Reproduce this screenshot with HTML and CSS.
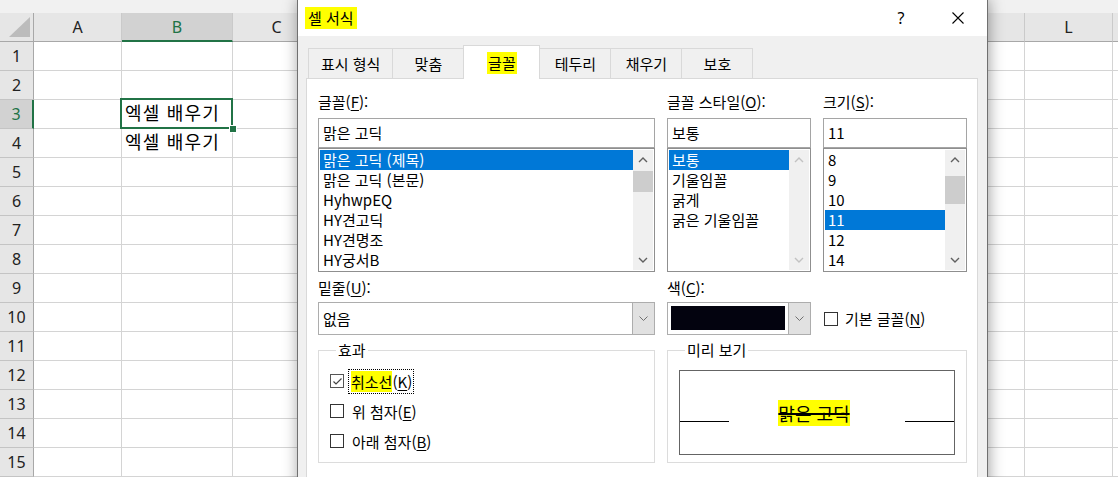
FILE: index.html
```html
<!DOCTYPE html>
<html lang="ko">
<head>
<meta charset="utf-8">
<title>셀 서식</title>
<link rel="stylesheet" href="styles.css">
</head>
<body>
<div class="sheet">
  <div class="topstrip"></div>
  <div class="grid">
    <div class="corner"><svg class="tri" width="33" height="28" viewBox="0 0 33 28"><polygon points="9,24 30,24 30,4"/></svg></div>
    <div class="ch">A</div><div class="ch sel">B</div><div class="ch">C</div><div class="ch">D</div><div class="ch">E</div><div class="ch">F</div><div class="ch">G</div><div class="ch">H</div><div class="ch">I</div><div class="ch">J</div><div class="ch">K</div><div class="ch">L</div><div class="ch"></div>

    <div class="rh">1</div><div class="c"></div><div class="c"></div><div class="c"></div><div class="c"></div><div class="c"></div><div class="c"></div><div class="c"></div><div class="c"></div><div class="c"></div><div class="c"></div><div class="c"></div><div class="c"></div><div class="c"></div>
    <div class="rh">2</div><div class="c"></div><div class="c"></div><div class="c"></div><div class="c"></div><div class="c"></div><div class="c"></div><div class="c"></div><div class="c"></div><div class="c"></div><div class="c"></div><div class="c"></div><div class="c"></div><div class="c"></div>
    <div class="rh sel">3</div><div class="c"></div><div class="c active">엑셀 배우기<span class="handle"></span></div><div class="c"></div><div class="c"></div><div class="c"></div><div class="c"></div><div class="c"></div><div class="c"></div><div class="c"></div><div class="c"></div><div class="c"></div><div class="c"></div><div class="c"></div>
    <div class="rh">4</div><div class="c"></div><div class="c">엑셀 배우기</div><div class="c"></div><div class="c"></div><div class="c"></div><div class="c"></div><div class="c"></div><div class="c"></div><div class="c"></div><div class="c"></div><div class="c"></div><div class="c"></div><div class="c"></div>
    <div class="rh">5</div><div class="c"></div><div class="c"></div><div class="c"></div><div class="c"></div><div class="c"></div><div class="c"></div><div class="c"></div><div class="c"></div><div class="c"></div><div class="c"></div><div class="c"></div><div class="c"></div><div class="c"></div>
    <div class="rh">6</div><div class="c"></div><div class="c"></div><div class="c"></div><div class="c"></div><div class="c"></div><div class="c"></div><div class="c"></div><div class="c"></div><div class="c"></div><div class="c"></div><div class="c"></div><div class="c"></div><div class="c"></div>
    <div class="rh">7</div><div class="c"></div><div class="c"></div><div class="c"></div><div class="c"></div><div class="c"></div><div class="c"></div><div class="c"></div><div class="c"></div><div class="c"></div><div class="c"></div><div class="c"></div><div class="c"></div><div class="c"></div>
    <div class="rh">8</div><div class="c"></div><div class="c"></div><div class="c"></div><div class="c"></div><div class="c"></div><div class="c"></div><div class="c"></div><div class="c"></div><div class="c"></div><div class="c"></div><div class="c"></div><div class="c"></div><div class="c"></div>
    <div class="rh">9</div><div class="c"></div><div class="c"></div><div class="c"></div><div class="c"></div><div class="c"></div><div class="c"></div><div class="c"></div><div class="c"></div><div class="c"></div><div class="c"></div><div class="c"></div><div class="c"></div><div class="c"></div>
    <div class="rh">10</div><div class="c"></div><div class="c"></div><div class="c"></div><div class="c"></div><div class="c"></div><div class="c"></div><div class="c"></div><div class="c"></div><div class="c"></div><div class="c"></div><div class="c"></div><div class="c"></div><div class="c"></div>
    <div class="rh">11</div><div class="c"></div><div class="c"></div><div class="c"></div><div class="c"></div><div class="c"></div><div class="c"></div><div class="c"></div><div class="c"></div><div class="c"></div><div class="c"></div><div class="c"></div><div class="c"></div><div class="c"></div>
    <div class="rh">12</div><div class="c"></div><div class="c"></div><div class="c"></div><div class="c"></div><div class="c"></div><div class="c"></div><div class="c"></div><div class="c"></div><div class="c"></div><div class="c"></div><div class="c"></div><div class="c"></div><div class="c"></div>
    <div class="rh">13</div><div class="c"></div><div class="c"></div><div class="c"></div><div class="c"></div><div class="c"></div><div class="c"></div><div class="c"></div><div class="c"></div><div class="c"></div><div class="c"></div><div class="c"></div><div class="c"></div><div class="c"></div>
    <div class="rh">14</div><div class="c"></div><div class="c"></div><div class="c"></div><div class="c"></div><div class="c"></div><div class="c"></div><div class="c"></div><div class="c"></div><div class="c"></div><div class="c"></div><div class="c"></div><div class="c"></div><div class="c"></div>
    <div class="rh">15</div><div class="c"></div><div class="c"></div><div class="c"></div><div class="c"></div><div class="c"></div><div class="c"></div><div class="c"></div><div class="c"></div><div class="c"></div><div class="c"></div><div class="c"></div><div class="c"></div><div class="c"></div>
  </div>
</div>

<div class="dialog">
  <div class="titlebar">
    <div class="title"><mark class="hl">셀 서식</mark></div>
    <div class="tbtn help">?</div>
    <div class="tbtn close"><svg width="12" height="12" viewBox="0 0 12 12"><path d="M0.5 0.5L11.5 11.5M11.5 0.5L0.5 11.5"/></svg></div>
  </div>
  <div class="dbody">
    <div class="tabs">
      <div class="tab">표시 형식</div>
      <div class="tab">맞춤</div>
      <div class="tab active"><mark class="hl">글꼴</mark></div>
      <div class="tab">테두리</div>
      <div class="tab">채우기</div>
      <div class="tab">보호</div>
    </div>
    <div class="panel">
      <div class="field">
        <div class="lbl">글꼴(<u>F</u>):</div>
        <div class="input">맑은 고딕</div>
        <div class="list">
          <div class="items">
            <div class="item sel">맑은 고딕 (제목)</div>
            <div class="item">맑은 고딕 (본문)</div>
            <div class="item">HyhwpEQ</div>
            <div class="item">HY견고딕</div>
            <div class="item">HY견명조</div>
            <div class="item">HY궁서B</div>
          </div>
          <div class="sbar">
            <div class="sbtn"><svg class="chev" width="10" height="6" viewBox="0 0 10 6"><polyline points="1,5 5,1 9,5"/></svg></div>
            <div class="track"><div class="thumb thumb-font"></div></div>
            <div class="sbtn"><svg class="chev" width="10" height="6" viewBox="0 0 10 6"><polyline points="1,1 5,5 9,1"/></svg></div>
          </div>
        </div>
      </div>

      <div class="field">
        <div class="lbl">글꼴 스타일(<u>O</u>):</div>
        <div class="input">보통</div>
        <div class="list">
          <div class="items">
            <div class="item sel">보통</div>
            <div class="item">기울임꼴</div>
            <div class="item">굵게</div>
            <div class="item">굵은 기울임꼴</div>
          </div>
          <div class="sbar">
            <div class="sbtn"><svg class="chev off" width="10" height="6" viewBox="0 0 10 6"><polyline points="1,5 5,1 9,5"/></svg></div>
            <div class="track"></div>
            <div class="sbtn"><svg class="chev off" width="10" height="6" viewBox="0 0 10 6"><polyline points="1,1 5,5 9,1"/></svg></div>
          </div>
        </div>
      </div>

      <div class="field">
        <div class="lbl">크기(<u>S</u>):</div>
        <div class="input">11</div>
        <div class="list">
          <div class="items">
            <div class="item">8</div>
            <div class="item">9</div>
            <div class="item">10</div>
            <div class="item sel">11</div>
            <div class="item">12</div>
            <div class="item">14</div>
          </div>
          <div class="sbar">
            <div class="sbtn"><svg class="chev" width="10" height="6" viewBox="0 0 10 6"><polyline points="1,5 5,1 9,5"/></svg></div>
            <div class="track"><div class="thumb thumb-size"></div></div>
            <div class="sbtn"><svg class="chev" width="10" height="6" viewBox="0 0 10 6"><polyline points="1,1 5,5 9,1"/></svg></div>
          </div>
        </div>
      </div>

      <div class="field">
        <div class="lbl lbl2">밑줄(<u>U</u>):</div>
        <div class="combo">
          <div class="cval">없음</div>
          <div class="cbtn"><svg class="dchev" width="9" height="5" viewBox="0 0 9 5"><polyline points="0.5,0.5 4.5,4.5 8.5,0.5"/></svg></div>
        </div>
      </div>

      <div class="field">
        <div class="lbl lbl2">색(<u>C</u>):</div>
        <div class="combo">
          <div class="swatch"></div>
          <div class="cbtn"><svg class="dchev" width="9" height="5" viewBox="0 0 9 5"><polyline points="0.5,0.5 4.5,4.5 8.5,0.5"/></svg></div>
        </div>
      </div>

      <div class="field field-end">
        <div class="check"><span class="box"></span><span>기본 글꼴(<u>N</u>)</span></div>
      </div>

      <fieldset class="group effects">
        <legend>효과</legend>
        <div class="erow"><span class="box on"><svg width="11" height="11" viewBox="0 0 11 11"><polyline points="1.5,5.5 4,8 9.5,2.5"/></svg></span><span class="focus"><mark class="hl">취소선</mark>(<u>K</u>)</span></div>
        <div class="erow"><span class="box"></span><span class="elbl">위 첨자(<u>E</u>)</span></div>
        <div class="erow"><span class="box"></span><span class="elbl">아래 첨자(<u>B</u>)</span></div>
      </fieldset>

      <fieldset class="group preview">
        <legend>미리 보기</legend>
        <div class="pbox">
          <div class="pline"></div>
          <div class="ptext"><mark class="hl">맑은 고딕</mark></div>
          <div class="pline"></div>
        </div>
      </fieldset>
    </div>
  </div>
</div>
</body>
</html>
```

FILE: styles.css
```css
* { box-sizing: border-box; }
html, body { margin: 0; padding: 0; }
body {
  width: 1118px;
  height: 477px;
  overflow: hidden;
  position: relative;
  background: #fff;
  color: #000;
  font-family: "Noto Sans CJK KR", "Noto Sans", sans-serif;
}

/* ---------- spreadsheet ---------- */
.sheet { width: 1118px; overflow: hidden; }
.topstrip { height: 13px; background: #f1f1f1; }
.grid {
  display: grid;
  grid-template-columns: 34px 88px 111px repeat(11, 88px);
  grid-auto-rows: 29px;
}
.corner {
  background: #e6e6e6;
  border-right: 1px solid #a8a8a8;
  border-bottom: 1px solid #a8a8a8;
}
.tri { display: block; }
.tri polygon { fill: #bcbcbc; }
.ch {
  background: #e6e6e6;
  border-right: 1px solid #cacaca;
  border-bottom: 1px solid #a8a8a8;
  display: flex;
  align-items: center;
  justify-content: center;
  font-family: "Noto Sans", sans-serif;
  font-size: 16px;
  color: #222;
}
.ch.sel {
  background: #d2d2d2;
  color: #217346;
  border-bottom: 2px solid #217346;
}
.rh {
  background: #e6e6e6;
  border-right: 1px solid #a8a8a8;
  border-bottom: 1px solid #c4c4c4;
  display: flex;
  align-items: center;
  justify-content: center;
  font-family: "Noto Sans", sans-serif;
  font-size: 16px;
  color: #222;
}
.rh.sel {
  background: #d2d2d2;
  color: #217346;
  border-right: 2px solid #217346;
}
.c {
  border-right: 1px solid #d4d4d4;
  border-bottom: 1px solid #d4d4d4;
  font-size: 18px;
  line-height: 24px;
  letter-spacing: 1.2px;
  padding-left: 3px;
  white-space: nowrap;
}
.c.active { position: relative; }
.c.active::before {
  content: "";
  position: absolute;
  left: -2px; top: -2px; right: -1px; bottom: -1px;
  border: 2px solid #217346;
}
.handle {
  position: absolute;
  right: -4px; bottom: -4px;
  width: 6px; height: 6px;
  background: #217346;
  box-shadow: 0 0 0 1px #fff;
}

/* ---------- dialog ---------- */
.dialog {
  position: absolute;
  left: 297px;
  top: -1px;
  width: 691px;
  height: 520px;
  background: #f0f0f0;
  border: 1px solid #707070;
  box-shadow: 1px 0 14px rgba(0, 0, 0, 0.38);
  font-family: "Noto Sans CJK KR", "Noto Sans", sans-serif;
  font-size: 15px;
  color: #000;
}
.hl {
  background: #ffff00;
  color: #000;
}
u { text-decoration-thickness: 1px; text-underline-offset: 2px; }

.titlebar {
  height: 36px;
  background: #fff;
  display: flex;
  align-items: center;
  padding: 0 6px 0 7px;
}
.title { flex: 1; }
.title .hl {
  display: inline-block;
  padding: 0 3px;
  line-height: 22px;
}
.tbtn {
  width: 46px;
  height: 36px;
  display: flex;
  align-items: center;
  justify-content: center;
}
.help { margin-right: 11px; font-family: "Noto Sans", sans-serif; font-size: 16px; }
.close path { stroke: #000; stroke-width: 1.1; fill: none; }

.dbody { padding: 0 9px 0 8px; }
.tabs {
  display: flex;
  align-items: flex-end;
  height: 42px;
  margin-left: 2px;
}
.tab {
  height: 30px;
  min-width: 72px;
  padding: 0 12px;
  border: 1px solid #d9d9d9;
  border-bottom: none;
  margin-right: -1px;
  line-height: 29px;
  text-align: center;
  background: #f0f0f0;
  white-space: nowrap;
}
.tab.active {
  position: relative;
  z-index: 1;
  background: #fff;
  height: 34px;
  min-width: 77px;
  margin-bottom: -1px;
  line-height: 33px;
}
.tab.active .hl {
  display: inline-block;
  line-height: 22px;
  padding: 0 1px;
}

.panel {
  background: #fff;
  border: 1px solid #d9d9d9;
  height: 440px;
  padding: 13px 9px 0 11px;
  display: grid;
  grid-template-columns: 337px 144px 144px;
  column-gap: 12px;
  row-gap: 6px;
  align-items: start;
  align-content: start;
}
.field { display: flex; flex-direction: column; }
.field-end { align-self: end; height: 33px; justify-content: center; }
.lbl { line-height: 20px; margin-bottom: 6px; white-space: nowrap; }
.lbl2 { margin-bottom: 4px; }
.input {
  height: 30px;
  border: 1px solid #a5a5a5;
  line-height: 28px;
  padding-left: 4px;
  background: #fff;
}
.list {
  height: 124px;
  border: 1px solid #8f8f8f;
  padding: 1px;
  display: flex;
  background: #fff;
}
.items { flex: 1; overflow: hidden; }
.item {
  height: 20px;
  line-height: 20px;
  padding-left: 3px;
  white-space: nowrap;
}
.item.sel { background: #0078d7; color: #fff; }
.sbar {
  width: 20px;
  background: #f0f0f0;
  display: flex;
  flex-direction: column;
}
.sbtn {
  height: 20px;
  display: flex;
  align-items: center;
  justify-content: center;
}
.track { flex: 1; }
.thumb { background: #cdcdcd; }
.thumb-font { margin-top: 1px; height: 21px; }
.thumb-size { margin-top: 6px; height: 28px; }
.chev { display: block; }
.chev polyline { fill: none; stroke: #606060; stroke-width: 1.4; }
.chev.off polyline { stroke: #c2c2c2; }

.combo {
  height: 33px;
  border: 1px solid #adadad;
  background: #fff;
  display: flex;
}
.cval { flex: 1; line-height: 31px; padding-left: 4px; }
.swatch {
  flex: 1;
  margin: 3px 3px 4px 3px;
  background: #03030f;
}
.cbtn {
  width: 22px;
  background: #e1e1e1;
  border-left: 1px solid #adadad;
  display: flex;
  align-items: center;
  justify-content: center;
}
.dchev polyline { fill: none; stroke: #707070; stroke-width: 1; }

.check { display: flex; align-items: center; padding-left: 1px; white-space: nowrap; }
.box {
  width: 14px;
  height: 14px;
  border: 1px solid #333;
  background: #fff;
  margin-right: 7px;
  display: flex;
  align-items: center;
  justify-content: center;
  flex: none;
}
.box.on { border-color: #555; }
.box polyline { fill: none; stroke: #444; stroke-width: 1.2; }

.group {
  margin: 0;
  border: 1px solid #dcdcdc;
  min-width: 0;
  height: 122px;
}
.group legend {
  margin-left: 6px;
  padding: 0 2px;
  line-height: 18px;
}
.effects { padding: 7px 0 6px 11px; }
.erow {
  height: 30px;
  display: flex;
  align-items: center;
}
.erow .box { margin-right: 5px; }
.focus {
  outline: 1px dotted #000;
  outline-offset: 0;
  padding: 1px 1px 1px 2px;
  line-height: 21px;
}
.focus .hl { display: inline-block; line-height: 21px; }
.elbl { padding-left: 3px; }

.preview { grid-column: 2 / span 2; padding: 11px 11px 0 11px; }
.pbox {
  height: 85px;
  border: 1px solid #646464;
  display: flex;
  align-items: center;
  justify-content: space-between;
}
.pline {
  width: 49px;
  height: 1px;
  margin-top: 18px;
  background: #000;
}
.ptext {
  font-size: 18px;
  line-height: 24px;
  margin-right: 6px;
}
.ptext .hl {
  text-decoration: line-through;
  text-decoration-color: #000;
  text-decoration-thickness: 1.5px;
}
```
